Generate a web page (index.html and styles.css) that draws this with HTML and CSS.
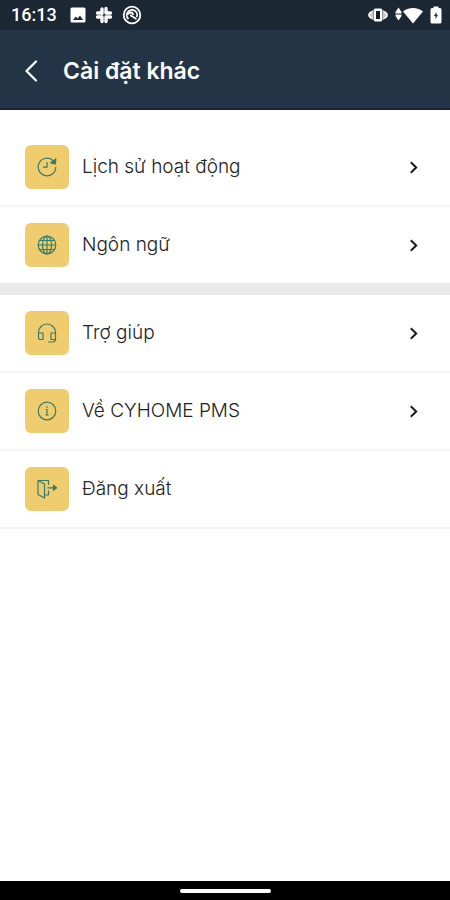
FILE: index.html
```html
<!DOCTYPE html>
<html lang="vi">
<head>
<meta charset="utf-8">
<meta name="viewport" content="width=device-width, initial-scale=1">
<title>Cài đặt khác</title>
<link rel="stylesheet" href="styles.css">
</head>
<body>
<div class="status">
  <div class="status-group">
    <time class="clock">16:13</time>
    <svg width="16" height="16" viewBox="0 0 16 16"><path fill="#fff" fill-rule="evenodd" d="M2 .5h12A1.500 1.500 0 0 1 15.500 2v12a1.500 1.500 0 0 1-1.500 1.500H2A1.500 1.500 0 0 1 .5 14V2A1.500 1.500 0 0 1 2 .5zM3 13h10L10 8.500l-2.500 3-1.800-2z"/></svg>
    <svg width="18" height="18" viewBox="0 0 18 18" fill="none" stroke="#fff" stroke-width="3.400" stroke-linecap="round"><path d="M7 3v4.500M2.500 7H7M11 2.500V7M11 7h4.500M7 11v4.500M2.500 11H7M11 11v4.500M11 11h4.500"/></svg>
    <svg width="20" height="20" viewBox="0 0 20 20" fill="none" stroke="#fff" stroke-width="1.800"><circle cx="10" cy="10" r="8.300"/><path d="M6.500 14A5.200 5.200 0 1 1 14.800 12M5.500 9.500C7 6.500 11 7 11 10M8 10l6.500 4"/></svg>
  </div>
  <div class="status-group status-right">
    <svg width="20" height="16" viewBox="0 0 20 16"><path fill="#ccc" d="M5 3 1 6v4l4 3zM15 3l4 3v4l-4 3z"/><path fill="none" stroke="#fff" stroke-width="1.500" d="M3.500 4.500 1 7v2l2.500 2.500M16.500 4.500 19 7v2l-2.500 2.500"/><rect x="5.500" y="1.500" width="9" height="13" rx="2" fill="#fff"/><rect x="8" y="4" width="4" height="8" fill="#111c26"/></svg>
    <svg width="28" height="18" viewBox="0 0 28 18" fill="#fff"><path d="M3.500 1.500 6.500 6v1.500h-6V6zM3.500 14.500.5 10V8.500h6V10zM8 5.500C13 .8 23 .8 28 5.500L18 17.500z"/></svg>
    <svg width="12" height="18" viewBox="0 0 12 18"><path fill="#fff" d="M3.500 2V.5h5V2H10a1.500 1.500 0 0 1 1.500 1.500V16a1.500 1.500 0 0 1-1.500 1.500H2A1.500 1.500 0 0 1 .5 16V3.500A1.500 1.500 0 0 1 2 2z"/><path fill="#1b2733" d="M6.500 6 4 10h1.500v3L8 9H6.500z"/></svg>
  </div>
</div>
<header class="bar">
  <button class="back" type="button" aria-label="Quay lại"><svg width="14" height="22" viewBox="0 0 14 22" fill="none" stroke="#fff" stroke-width="2.200" stroke-linecap="round" stroke-linejoin="round"><path d="M12 1.500 2.500 11l9.500 9.500"/></svg></button>
  <h1>Cài đặt khác</h1>
</header>
<main>
  <nav class="group first">
    <a class="row" href="#history">
      <span class="tile"><svg class="icon" viewBox="0 0 20 20"><path d="M18.800 10a8.800 8.800 0 1 1-2.600-6.300M10 5v5.200H6M7 7.500v.1"/><path class="solid" d="m18.800 2-.3 4.800-4.700-1z"/></svg></span>
      <span class="label">Lịch sử hoạt động</span>
      <svg class="chev" viewBox="0 0 8 12"><path d="m1.500 1.200 5 4.800-5 4.800"/></svg>
    </a>
    <a class="row" href="#language">
      <span class="tile"><svg class="icon" viewBox="0 0 20 20"><circle cx="10" cy="10" r="8.800"/><ellipse cx="10" cy="10" rx="4.500" ry="8.800"/><path d="M10 1.200v17.600M1.200 10h17.600M2.800 5.500h14.400M2.800 14.500h14.400"/></svg></span>
      <span class="label">Ngôn ngữ</span>
      <svg class="chev" viewBox="0 0 8 12"><path d="m1.500 1.200 5 4.800-5 4.800"/></svg>
    </a>
  </nav>
  <nav class="group">
    <a class="row" href="#help">
      <span class="tile"><svg class="icon" viewBox="0 0 20 20"><path d="M1.500 11V9.500a8.500 8.500 0 0 1 17 0V16q0 3-3 3H11M1.500 10h4.500v6.500H3.500q-2 0-2-2zM18.500 10H14v6.500h4.500"/></svg></span>
      <span class="label">Trợ giúp</span>
      <svg class="chev" viewBox="0 0 8 12"><path d="m1.500 1.200 5 4.800-5 4.800"/></svg>
    </a>
    <a class="row" href="#about">
      <span class="tile"><svg class="icon" viewBox="0 0 20 20"><circle cx="10" cy="10" r="8.800"/><path d="M8.700 8.500H10v5.500M8.500 14h3M10 5.200v1.500"/></svg></span>
      <span class="label">Về CYHOME PMS</span>
      <svg class="chev" viewBox="0 0 8 12"><path d="m1.500 1.200 5 4.800-5 4.800"/></svg>
    </a>
    <a class="row" href="#logout">
      <span class="tile"><svg class="icon" viewBox="0 0 20 20"><path d="M1 1.500 7.500 5v14L1 15.500zM1 1.500h10.500V6M11.500 11.500v4.500h-4M10.500 8.800h9"/><path class="solid" d="m16.500 6.300 3 2.500-3 2.500z"/></svg></span>
      <span class="label">Đăng xuất</span>
    </a>
  </nav>
</main>
<footer class="home"><span class="pill"></span></footer>
</body>
</html>
```
FILE: styles.css
```css
* { box-sizing: border-box; }
body {
  margin: 0;
  min-height: 100vh;
  display: flex;
  flex-direction: column;
  background: #fff;
  color: #222;
  font-family: Inter, Roboto, sans-serif;
}
svg { display: block; flex: none; }
.status {
  height: 30px;
  padding: 0 8px 0 11px;
  display: flex;
  align-items: center;
  justify-content: space-between;
  background: #1b2733;
  color: #fff;
}
.status-group { display: flex; align-items: center; gap: 9px; }
.status-right { gap: 7px; }
.clock { width: 50px; font: 500 18px/30px Roboto, sans-serif; }
.bar {
  height: 80px;
  padding: 4px 20px 0;
  display: flex;
  align-items: center;
  gap: 19px;
  background: #233446;
  border-bottom: 2px solid #16213c;
  color: #fff;
}
.back {
  width: 24px;
  height: 40px;
  padding: 0 0 0 4px;
  border: 0;
  background: none;
}
h1 { margin: 0; font-size: 23px; line-height: 32px; font-weight: 600; }
main { flex: 1; }
.first { padding-top: 19px; border-bottom: 12px solid #eaeaea; }
.row {
  padding: 16px 32px 16px 25px;
  display: flex;
  align-items: center;
  gap: 13px;
  border-bottom: 2px solid #f5f5f5;
  color: inherit;
  text-decoration: none;
}
.first .row:last-child { border-bottom: 0; }
.tile {
  width: 44px;
  height: 44px;
  display: grid;
  place-items: center;
  border-radius: 6px;
  background: #efcc6e;
}
.icon {
  width: 20px;
  height: 20px;
  fill: none;
  stroke: #397b69;
  stroke-width: 1.200;
  stroke-linejoin: round;
}
.solid { fill: #397b69; }
.label { flex: 1; font-size: 19px; line-height: 30px; font-weight: 300; }
.chev {
  width: 9px;
  height: 13px;
  fill: none;
  stroke: #181818;
  stroke-width: 1.800;
}
.home {
  height: 19px;
  display: grid;
  place-items: center;
  background: #000;
}
.pill { width: 91px; height: 4px; border-radius: 2px; background: #fff; }
```
